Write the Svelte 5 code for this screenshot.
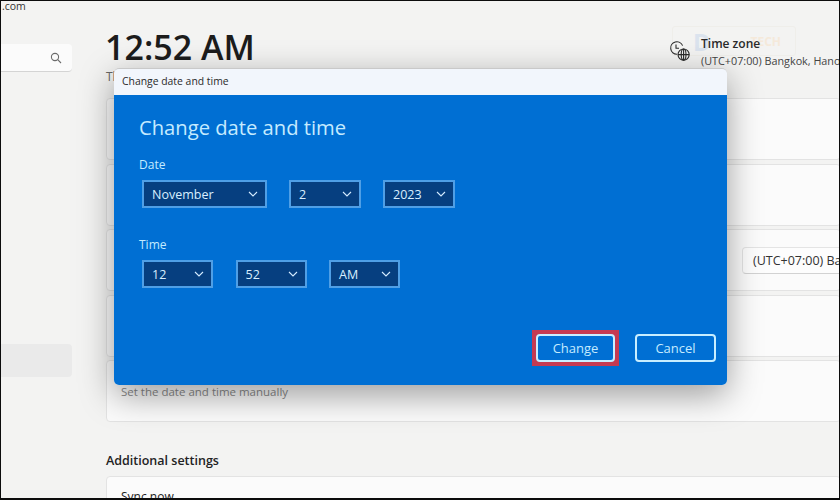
<script>
  const dateSelects = [
    { label: 'November', width: 125 },
    { label: '2', width: 72 },
    { label: '2023', width: 72 }
  ];
  const timeSelects = [
    { label: '12', width: 71 },
    { label: '52', width: 71 },
    { label: 'AM', width: 71 }
  ];
</script>

<div class="frame">
  <aside class="sidebar">
    <div class="account">.com</div>
    <div class="search">
      <svg width="12" height="12" viewBox="0 0 12 12" fill="none" stroke="#6b6b6b" stroke-width="1.1">
        <circle cx="5" cy="5" r="3.6" />
        <path d="M7.7 7.7L11 11" />
      </svg>
    </div>
    <div class="active-item"></div>
  </aside>

  <main class="main">
    <header class="header">
      <div class="clock">
        <h1>12:52 AM</h1>
        <p>Thursday, November 2, 2023</p>
      </div>
      <div class="zone">
        <svg class="zone-icon" width="22" height="22" viewBox="0 0 22 22" fill="none" stroke="#2a2a2a" stroke-width="1.1">
          <path d="M8 14.2A6.2 6.2 0 1 1 13.6 5.6" />
          <path d="M7 4.6V8.2H10" />
          <circle cx="14.6" cy="14.6" r="5.6" />
          <ellipse cx="14.6" cy="14.6" rx="2.4" ry="5.6" />
          <path d="M9 14.6H20.2M14.6 9V20.2" />
        </svg>
        <div class="zone-text">
          <strong>Time zone</strong>
          <span>(UTC+07:00) Bangkok, Hanoi, Jakarta</span>
        </div>
      </div>
    </header>

    <section class="cards">
      <div class="card"></div>
      <div class="card"></div>
      <div class="card card-select"><div class="zone-select">(UTC+07:00) Bangkok, Hanoi, Jakarta</div></div>
      <div class="card"></div>
      <div class="card card-manual"><span>Set the date and time manually</span></div>
    </section>

    <h2>Additional settings</h2>
    <div class="card card-sync"><span>Sync now</span></div>
  </main>

  <div class="watermark">
    <span class="mark-d">D</span>
    <span class="mark-t">TECH</span>
  </div>

  <div class="dialog">
    <div class="titlebar">Change date and time</div>
    <div class="body">
      <div class="fields">
        <h3>Change date and time</h3>
        <div class="label">Date</div>
        <div class="row">
          {#each dateSelects as s}
            <div class="select" style="width: {s.width}px">
              <span>{s.label}</span>
              <svg width="10" height="6" viewBox="0 0 10 6" fill="none" stroke="#d5ecff" stroke-width="1.1"><path d="M1 1l4 4 4-4" /></svg>
            </div>
          {/each}
        </div>
        <div class="label label-time">Time</div>
        <div class="row row-time">
          {#each timeSelects as s}
            <div class="select" style="width: {s.width}px">
              <span>{s.label}</span>
              <svg width="10" height="6" viewBox="0 0 10 6" fill="none" stroke="#d5ecff" stroke-width="1.1"><path d="M1 1l4 4 4-4" /></svg>
            </div>
          {/each}
        </div>
      </div>
      <div class="actions">
        <div class="highlight"><div class="btn btn-change">Change</div></div>
        <div class="btn btn-cancel">Cancel</div>
      </div>
    </div>
  </div>
</div>

<style>
  :global(body) {
    margin: 0;
    background: #f3f3f3;
  }
  .frame {
    position: relative;
    box-sizing: border-box;
    width: 840px;
    height: 500px;
    display: flex;
    overflow: hidden;
    background: #f3f3f2;
    border: solid #0c0c0c;
    border-width: 1px 1px 2px 1px;
    font-family: "Open Sans", "Noto Sans", sans-serif;
    color: #1f1f1f;
  }
  .sidebar {
    flex: 0 0 71px;
    display: flex;
    flex-direction: column;
  }
  .account {
    font-size: 10.5px;
    line-height: 10px;
    height: 43px;
    padding-left: 1px;
    color: #333;
  }
  .search {
    box-sizing: border-box;
    height: 28px;
    background: #fbfbfb;
    border-radius: 0 4px 4px 0;
    border-bottom: 1px solid #d4d4d4;
    display: flex;
    align-items: center;
    justify-content: flex-end;
    padding-right: 10px;
  }
  .active-item {
    height: 33px;
    margin-top: 272px;
    background: #eaeaea;
    border-radius: 0 4px 4px 0;
  }
  .main {
    flex: 1;
    min-width: 0;
    padding-left: 34px;
    display: flex;
    flex-direction: column;
  }
  .header {
    display: flex;
    flex: none;
    height: 97px;
  }
  .clock {
    flex: 0 0 563px;
    padding-top: 26px;
  }
  h1 {
    margin: 0 0 0 -1px;
    font-size: 34px;
    line-height: 40px;
    font-weight: 600;
    color: #1c1c1c;
  }
  .clock p {
    margin: 2px 0 0;
    font-size: 12px;
    line-height: 16px;
    color: #666;
  }
  .zone {
    flex: 1;
    min-width: 0;
    display: flex;
    gap: 10px;
    padding-top: 35px;
    white-space: nowrap;
  }
  .zone-icon {
    flex: none;
    margin-top: 4px;
  }
  .zone-text {
    display: flex;
    flex-direction: column;
    gap: 1px;
    font-size: 10.8px;
    line-height: 16px;
    color: #444;
  }
  .zone-text strong {
    font-size: 12px;
    font-weight: 600;
    color: #2a2a2a;
  }
  .cards {
    display: flex;
    flex: none;
    flex-direction: column;
    gap: 3.5px;
  }
  .card {
    box-sizing: border-box;
    height: 62px;
    margin-right: -2px;
    background: #fbfbfb;
    border: 1px solid #e3e3e3;
    border-radius: 4px;
    flex: none;
  }
  .card-select {
    display: flex;
    align-items: center;
    padding-left: 635px;
    white-space: nowrap;
    overflow: hidden;
  }
  .zone-select {
    box-sizing: border-box;
    height: 27px;
    line-height: 25px;
    padding-left: 10px;
    min-width: 240px;
    font-size: 12.5px;
    color: #333;
    background: #fdfdfd;
    border: 1px solid #e4e4e4;
    border-bottom-color: #d2d2d2;
    border-radius: 4px;
  }
  .card-manual {
    display: flex;
    align-items: center;
    padding-left: 14px;
    font-size: 11.5px;
    color: #8a8a8a;
  }
  h2 {
    flex: none;
    margin: 30px 0 0;
    font-size: 12.5px;
    line-height: 17px;
    font-weight: 600;
    color: #222;
  }
  .card-sync {
    margin-top: 7px;
    padding: 12px 14px;
    font-size: 12px;
    line-height: 16px;
    color: #222;
  }
  .watermark {
    position: absolute;
    left: 671px;
    top: 25px;
    width: 124px;
    height: 30px;
    box-sizing: border-box;
    border: 1px solid #efeeea;
    border-radius: 3px;
    display: flex;
    align-items: center;
    justify-content: space-between;
    padding: 0 14px 0 20px;
    font-weight: 700;
    font-size: 12px;
    z-index: 0;
  }
  .mark-d {
    color: #dbe3ee;
    font-size: 24px;
  }
  .mark-t {
    color: #f5e9da;
  }
  .zone, .cards {
    position: relative;
    z-index: 1;
  }
  .dialog {
    position: absolute;
    z-index: 2;
    left: 113px;
    top: 67px;
    width: 613px;
    height: 317px;
    display: flex;
    flex-direction: column;
    border-radius: 5px;
    box-shadow: 0 10px 34px rgba(0, 0, 0, 0.38);
  }
  .titlebar {
    flex: 0 0 27px;
    box-sizing: border-box;
    padding-left: 8px;
    font-size: 10.4px;
    color: #2a2a2a;
    background: #f2f6fc;
    border-top: 1px solid #c9c9c9;
    border-radius: 5px 5px 0 0;
    line-height: 25px;
  }
  .body {
    flex: 1;
    display: flex;
    flex-direction: column;
    justify-content: space-between;
    background: #006fd3;
    color: #c3ebff;
    border-radius: 0 0 5px 5px;
  }
  .fields {
    padding: 19px 0 0 25px;
  }
  h3 {
    margin: 0;
    font-size: 20.2px;
    line-height: 26px;
    font-weight: 400;
    color: #c5ebff;
  }
  .label {
    margin-top: 16px;
    font-size: 12px;
    line-height: 18px;
  }
  .label-time {
    margin-top: 28px;
  }
  .row {
    display: flex;
    gap: 22px;
    margin: 6px 0 0 3px;
  }
  .row-time {
    gap: 22.5px;
  }
  .select {
    box-sizing: border-box;
    height: 28px;
    display: flex;
    align-items: center;
    justify-content: space-between;
    padding: 0 7px 0 8px;
    font-size: 12.5px;
    color: #d8efff;
    background: #063f80;
    border: 2px solid #4f9fe6;
  }
  .actions {
    display: flex;
    align-items: center;
    justify-content: flex-end;
    gap: 16px;
    padding: 0 11px 19px 0;
  }
  .highlight {
    padding: 3px;
    border: 1px solid #c43a52;
    background: #c43a52;
  }
  .btn {
    box-sizing: border-box;
    width: 81px;
    height: 28px;
    line-height: 24px;
    text-align: center;
    font-size: 13px;
    color: #c5ebff;
    background: #006fd3;
    border: 2px solid #c8eeff;
    border-radius: 4px;
  }
  .btn-change {
    width: 79px;
  }
</style>
